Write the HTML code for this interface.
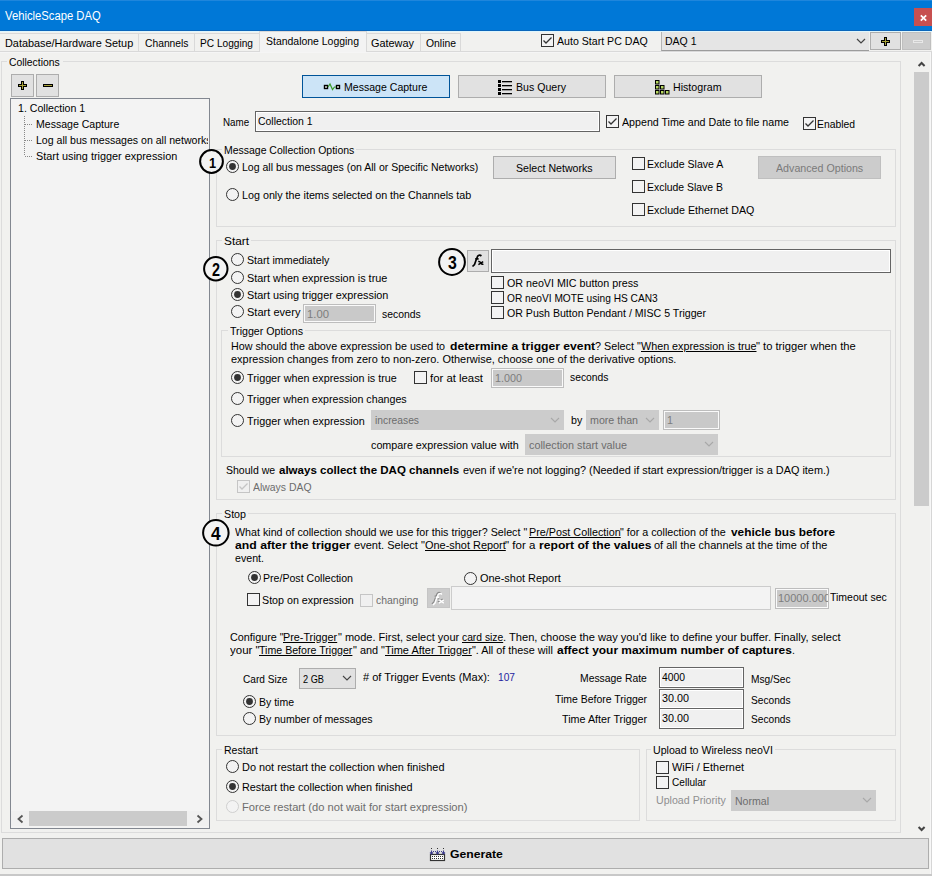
<!DOCTYPE html>
<html><head><meta charset="utf-8"><style>
html,body{margin:0;padding:0}
body{width:932px;height:876px;overflow:hidden;position:relative;background:#f1f1ef;font-family:"Liberation Sans", sans-serif;font-size:11px;color:#000}
b{font-weight:bold}
</style></head><body>
<div style="position:absolute;left:0px;top:0px;width:932px;height:31px;background:#0078d7"></div>
<div style="position:absolute;left:0px;top:0px;width:932px;height:1px;background:#1f86dc"></div>
<div style="position:absolute;left:914px;top:8px;width:18px;height:18px;background:#c75050"></div>
<svg style="position:absolute;left:914px;top:8px" width="18" height="18"><path d="M6.8 7.3 L12.2 12.7 M12.2 7.3 L6.8 12.7" stroke="#fff" stroke-width="1.7"/></svg>
<div style="position:absolute;left:0px;top:30px;width:932px;height:1px;background:#0a66bb"></div>
<div style="position:absolute;left:0px;top:31px;width:932px;height:1px;background:#def6fd"></div>
<div style="position:absolute;left:0px;top:51px;width:932px;height:1px;background:#d9d9d9"></div>
<div style="position:absolute;left:0px;top:33px;width:138px;height:18px;background:#f1f1ef;border-top:1px solid #d9d9d9;box-sizing:border-box"></div>
<div style="position:absolute;left:138px;top:33px;width:56px;height:18px;background:#f1f1ef;border-top:1px solid #d9d9d9;box-sizing:border-box"></div>
<div style="position:absolute;left:194px;top:33px;width:65px;height:18px;background:#f1f1ef;border-top:1px solid #d9d9d9;box-sizing:border-box"></div>
<div style="position:absolute;left:367px;top:33px;width:53px;height:18px;background:#f1f1ef;border-top:1px solid #d9d9d9;box-sizing:border-box"></div>
<div style="position:absolute;left:420px;top:33px;width:41px;height:18px;background:#f1f1ef;border-top:1px solid #d9d9d9;box-sizing:border-box"></div>
<div style="position:absolute;left:138px;top:33px;width:1px;height:18px;background:#d9d9d9"></div>
<div style="position:absolute;left:194px;top:33px;width:1px;height:18px;background:#d9d9d9"></div>
<div style="position:absolute;left:420px;top:33px;width:1px;height:18px;background:#d9d9d9"></div>
<div style="position:absolute;left:460px;top:33px;width:1px;height:18px;background:#d9d9d9"></div>
<div style="position:absolute;left:259px;top:31px;width:108px;height:21px;border:1px solid #d9d9d9;border-bottom:none;box-sizing:border-box;background:#f3f3f3"></div>
<div style="position:absolute;left:541px;top:34px;width:13px;height:13px;box-sizing:border-box;border:1px solid #333;background:#f3f3f3"></div><svg style="position:absolute;left:541px;top:34px" width="13" height="13"><path d="M2.5 6.5 L5 9 L10.5 3.5" fill="none" stroke="#333" stroke-width="1.3"/></svg>
<div style="position:absolute;left:661px;top:32px;width:208px;height:19px;background:#e5e5e5;border-left:1px solid #b4b4b4;border-bottom:1px solid #9c9c9c;box-sizing:border-box"></div>
<svg style="position:absolute;left:856px;top:37.5px" width="10" height="7"><path d="M1 1 L5 5 L9 1" fill="none" stroke="#444" stroke-width="1.2"/></svg>
<div style="position:absolute;left:870px;top:32px;width:31px;height:18px;background:#e1e1e1;border:1px solid #adadad;box-sizing:border-box"></div>
<div style="position:absolute;left:881px;top:40px;width:9px;height:3px;background:#000"></div><div style="position:absolute;left:884px;top:37px;width:3px;height:9px;background:#000"></div><div style="position:absolute;left:882px;top:41px;width:7px;height:1px;background:#a8a23a"></div><div style="position:absolute;left:885px;top:38px;width:1px;height:7px;background:#a8a23a"></div>
<div style="position:absolute;left:902px;top:32px;width:29px;height:18px;background:#cccccc;border:1px solid #bfbfbf;box-sizing:border-box"></div>
<div style="position:absolute;left:913px;top:40px;width:10px;height:3px;border:1px solid #e8e8e8;box-sizing:border-box"></div>
<div style="position:absolute;left:0px;top:52px;width:931px;height:1px;background:#f5f5f5"></div>
<div style="position:absolute;left:930px;top:52px;width:1px;height:822px;background:#f7f7f7"></div>
<div style="position:absolute;left:931px;top:52px;width:1px;height:822px;background:#d6d6d6"></div>
<div style="position:absolute;left:1px;top:61px;width:900px;height:772px;border:1px solid #dcdcdc;box-sizing:border-box"></div>
<div style="position:absolute;left:7px;top:58px;width:56px;height:10px;background:#f1f1ef"></div>
<div style="position:absolute;left:11px;top:74px;width:23px;height:23px;background:#e1e1e1;border:1px solid #adadad;box-sizing:border-box"></div>
<div style="position:absolute;left:18px;top:84px;width:9px;height:3px;background:#000"></div><div style="position:absolute;left:21px;top:81px;width:3px;height:9px;background:#000"></div><div style="position:absolute;left:19px;top:85px;width:7px;height:1px;background:#a8a23a"></div><div style="position:absolute;left:22px;top:82px;width:1px;height:7px;background:#a8a23a"></div>
<div style="position:absolute;left:36px;top:74px;width:23px;height:23px;background:#e1e1e1;border:1px solid #adadad;box-sizing:border-box"></div>
<div style="position:absolute;left:43px;top:84px;width:10px;height:3px;background:#000"></div><div style="position:absolute;left:44px;top:85px;width:8px;height:1px;background:#a8a23a"></div>
<div style="position:absolute;left:10px;top:98px;width:200px;height:731px;background:#f3f3f3;border:1px solid #828790;box-sizing:border-box"></div>
<svg style="position:absolute;left:20px;top:112px" width="20" height="50"><path d="M4.5 4 V44 M5 12.5 H13 M5 28.5 H13 M5 44.5 H13" stroke="#888" stroke-width="1" stroke-dasharray="1 1" fill="none"/></svg>
<div style="position:absolute;left:11px;top:811px;width:198px;height:15px;background:#f0f0f0"></div>
<div style="position:absolute;left:29px;top:811px;width:158px;height:15px;background:#cbcbcb"></div>
<svg style="position:absolute;left:16px;top:814px" width="9" height="10"><path d="M6.5 1.5 L2.5 5 L6.5 8.5" fill="none" stroke="#555" stroke-width="1.8"/></svg>
<svg style="position:absolute;left:195px;top:814px" width="9" height="10"><path d="M2.5 1.5 L6.5 5 L2.5 8.5" fill="none" stroke="#555" stroke-width="1.8"/></svg>
<div style="position:absolute;left:914px;top:72px;width:15px;height:434px;background:#cbcbcb"></div>
<svg style="position:absolute;left:916px;top:59px" width="12" height="10"><path d="M2.6 7 L5.6 4 L8.6 7" fill="none" stroke="#444" stroke-width="2"/></svg>
<svg style="position:absolute;left:916px;top:824px" width="12" height="10"><path d="M2.6 3 L5.6 6 L8.6 3" fill="none" stroke="#444" stroke-width="2"/></svg>
<div style="position:absolute;left:302px;top:75px;width:148px;height:23px;background:#cce4f7;border:1px solid #005499;box-sizing:border-box"></div>
<svg style="position:absolute;left:323px;top:82px" width="18" height="10"><rect x="1.5" y="3.5" width="3" height="3" fill="#fff" stroke="#000" stroke-width="1.4"/><rect x="13.5" y="3.5" width="3" height="3" fill="#fff" stroke="#000" stroke-width="1.4"/><path d="M5 5 L7 2 L9.5 7.5 L11.5 5 H13" fill="none" stroke="#3a9a2a" stroke-width="1.2"/></svg>
<div style="position:absolute;left:458px;top:75px;width:148px;height:23px;background:#e1e1e1;border:1px solid #adadad;box-sizing:border-box"></div>
<svg style="position:absolute;left:497px;top:79px" width="17" height="16"><rect x="1" y="1" width="3" height="3" fill="#000"/><rect x="5" y="2" width="10" height="1.3" fill="#000"/><rect x="1" y="5" width="3" height="3" fill="#000"/><rect x="5" y="6" width="10" height="1.3" fill="#000"/><rect x="1" y="9" width="3" height="3" fill="#000"/><rect x="5" y="10" width="10" height="1.3" fill="#000"/><rect x="1" y="13" width="3" height="3" fill="#000"/><rect x="5" y="14" width="10" height="1.3" fill="#000"/></svg>
<div style="position:absolute;left:614px;top:75px;width:148px;height:23px;background:#e1e1e1;border:1px solid #adadad;box-sizing:border-box"></div>
<svg style="position:absolute;left:655px;top:80px" width="15" height="15"><rect x="0.5" y="0.5" width="3.5" height="3.5" fill="#b8d860" stroke="#000" stroke-width="1"/><rect x="0.5" y="5.5" width="3.5" height="3.5" fill="#b8d860" stroke="#000" stroke-width="1"/><rect x="5.5" y="5.5" width="3.5" height="3.5" fill="#b8d860" stroke="#000" stroke-width="1"/><rect x="0.5" y="10.5" width="3.5" height="3.5" fill="#b8d860" stroke="#000" stroke-width="1"/><rect x="5.5" y="10.5" width="3.5" height="3.5" fill="#b8d860" stroke="#000" stroke-width="1"/><rect x="10.5" y="10.5" width="3.5" height="3.5" fill="#b8d860" stroke="#000" stroke-width="1"/></svg>
<div style="position:absolute;left:255px;top:111px;width:345px;height:21px;background:#f0f0f0;border:1px solid #646464;box-shadow:inset 0 0 0 1px #fff;box-sizing:border-box"></div>
<div style="position:absolute;left:606px;top:115px;width:13px;height:13px;box-sizing:border-box;border:1px solid #333;background:#f3f3f3"></div><svg style="position:absolute;left:606px;top:115px" width="13" height="13"><path d="M2.5 6.5 L5 9 L10.5 3.5" fill="none" stroke="#333" stroke-width="1.3"/></svg>
<div style="position:absolute;left:803px;top:117px;width:13px;height:13px;box-sizing:border-box;border:1px solid #333;background:#f3f3f3"></div><svg style="position:absolute;left:803px;top:117px" width="13" height="13"><path d="M2.5 6.5 L5 9 L10.5 3.5" fill="none" stroke="#333" stroke-width="1.3"/></svg>
<div style="position:absolute;left:216px;top:149px;width:680px;height:78px;border:1px solid #dcdcdc;box-sizing:border-box"></div>
<div style="position:absolute;left:221.7px;top:146px;width:134.3px;height:8px;background:#f1f1ef"></div>
<svg style="position:absolute;left:226px;top:160px" width="13" height="13"><circle cx="6.5" cy="6.5" r="6" fill="#f3f3f3" stroke="#333" stroke-width="1"/><circle cx="6.5" cy="6.5" r="3.4" fill="#333"/></svg>
<svg style="position:absolute;left:226px;top:188px" width="13" height="13"><circle cx="6.5" cy="6.5" r="6" fill="#f3f3f3" stroke="#333" stroke-width="1"/></svg>
<div style="position:absolute;left:493px;top:156px;width:123px;height:23px;background:#e1e1e1;border:1px solid #adadad;box-sizing:border-box"></div>
<div style="position:absolute;left:632px;top:157px;width:13px;height:13px;box-sizing:border-box;border:1px solid #333;background:#f3f3f3"></div>
<div style="position:absolute;left:632px;top:180px;width:13px;height:13px;box-sizing:border-box;border:1px solid #333;background:#f3f3f3"></div>
<div style="position:absolute;left:632px;top:203px;width:13px;height:13px;box-sizing:border-box;border:1px solid #333;background:#f3f3f3"></div>
<div style="position:absolute;left:758px;top:156px;width:123px;height:23px;background:#cccccc;border:1px solid #bfbfbf;box-sizing:border-box"></div>
<div style="position:absolute;left:216px;top:240px;width:680px;height:260px;border:1px solid #dcdcdc;box-sizing:border-box"></div>
<div style="position:absolute;left:221.8px;top:237px;width:29px;height:8px;background:#f1f1ef"></div>
<svg style="position:absolute;left:231px;top:253px" width="13" height="13"><circle cx="6.5" cy="6.5" r="6" fill="#f3f3f3" stroke="#333" stroke-width="1"/></svg>
<svg style="position:absolute;left:231px;top:271px" width="13" height="13"><circle cx="6.5" cy="6.5" r="6" fill="#f3f3f3" stroke="#333" stroke-width="1"/></svg>
<svg style="position:absolute;left:231px;top:288px" width="13" height="13"><circle cx="6.5" cy="6.5" r="6" fill="#f3f3f3" stroke="#333" stroke-width="1"/><circle cx="6.5" cy="6.5" r="3.4" fill="#333"/></svg>
<svg style="position:absolute;left:231px;top:305px" width="13" height="13"><circle cx="6.5" cy="6.5" r="6" fill="#f3f3f3" stroke="#333" stroke-width="1"/></svg>
<div style="position:absolute;left:303px;top:304px;width:73px;height:19px;background:#c9c9c9;border:1px solid #bdbdbd;box-shadow:inset 0 0 0 1px #fafafa;box-sizing:border-box"></div>
<div style="position:absolute;left:467px;top:250px;width:22px;height:22px;background:#e1e1e1;border:1px solid #adadad;box-sizing:border-box"></div>
<svg style="position:absolute;left:467px;top:250px" width="22" height="22"><path d="M5.5 16.5 L7.5 14.5 L9.3 9.5 L10.6 6.3 Q11.6 4.6 13.6 5.2 L14.2 6.2 M8.2 8.8 H11.6" fill="none" stroke="#000" stroke-width="1.7"/><path d="M11.2 11.6 Q12.8 11.2 13.8 12.8 Q14.8 14.6 16.4 14.2 M11.4 14.6 L16.2 11.6" fill="none" stroke="#000" stroke-width="1.5"/></svg>
<div style="position:absolute;left:491px;top:249px;width:400px;height:24px;background:#f0f0f0;border:1px solid #646464;box-shadow:inset 0 0 0 1px #fff;box-sizing:border-box"></div>
<div style="position:absolute;left:491px;top:276px;width:13px;height:13px;box-sizing:border-box;border:1px solid #333;background:#f3f3f3"></div>
<div style="position:absolute;left:491px;top:291px;width:13px;height:13px;box-sizing:border-box;border:1px solid #333;background:#f3f3f3"></div>
<div style="position:absolute;left:491px;top:306px;width:13px;height:13px;box-sizing:border-box;border:1px solid #333;background:#f3f3f3"></div>
<div style="position:absolute;left:221px;top:330px;width:670px;height:127px;border:1px solid #dcdcdc;box-sizing:border-box"></div>
<div style="position:absolute;left:227.5px;top:327px;width:77px;height:8px;background:#f1f1ef"></div>
<svg style="position:absolute;left:231px;top:371px" width="13" height="13"><circle cx="6.5" cy="6.5" r="6" fill="#f3f3f3" stroke="#333" stroke-width="1"/><circle cx="6.5" cy="6.5" r="3.4" fill="#333"/></svg>
<div style="position:absolute;left:414px;top:371px;width:13px;height:13px;box-sizing:border-box;border:1px solid #333;background:#f3f3f3"></div>
<div style="position:absolute;left:491px;top:368px;width:73px;height:20px;background:#c9c9c9;border:1px solid #bdbdbd;box-shadow:inset 0 0 0 1px #fafafa;box-sizing:border-box"></div>
<svg style="position:absolute;left:231px;top:392px" width="13" height="13"><circle cx="6.5" cy="6.5" r="6" fill="#f3f3f3" stroke="#333" stroke-width="1"/></svg>
<svg style="position:absolute;left:231px;top:414px" width="13" height="13"><circle cx="6.5" cy="6.5" r="6" fill="#f3f3f3" stroke="#333" stroke-width="1"/></svg>
<div style="position:absolute;left:371px;top:410px;width:193px;height:20px;background:#cccccc;border:1px solid #cccccc;box-sizing:border-box"></div>
<svg style="position:absolute;left:550px;top:417px" width="10" height="7"><path d="M1 1 L5 5 L9 1" fill="none" stroke="#a8a8a8" stroke-width="1.1"/></svg>
<div style="position:absolute;left:586px;top:410px;width:73px;height:20px;background:#cccccc;border:1px solid #cccccc;box-sizing:border-box"></div>
<svg style="position:absolute;left:645px;top:417px" width="10" height="7"><path d="M1 1 L5 5 L9 1" fill="none" stroke="#a8a8a8" stroke-width="1.1"/></svg>
<div style="position:absolute;left:663px;top:410px;width:57px;height:20px;background:#c9c9c9;border:1px solid #bdbdbd;box-shadow:inset 0 0 0 1px #fafafa;box-sizing:border-box"></div>
<div style="position:absolute;left:525px;top:434px;width:193px;height:21px;background:#cccccc;border:1px solid #cccccc;box-sizing:border-box"></div>
<svg style="position:absolute;left:704px;top:441px" width="10" height="7"><path d="M1 1 L5 5 L9 1" fill="none" stroke="#a8a8a8" stroke-width="1.1"/></svg>
<div style="position:absolute;left:237px;top:480px;width:13px;height:13px;box-sizing:border-box;border:1px solid #c5c5c5;background:#f0f0f0"></div><svg style="position:absolute;left:237px;top:480px" width="13" height="13"><path d="M2.5 6.5 L5 9 L10.5 3.5" fill="none" stroke="#c5c5c5" stroke-width="1.3"/></svg>
<div style="position:absolute;left:216px;top:513px;width:680px;height:223px;border:1px solid #dcdcdc;box-sizing:border-box"></div>
<div style="position:absolute;left:221.7px;top:510px;width:26px;height:8px;background:#f1f1ef"></div>
<svg style="position:absolute;left:248px;top:571px" width="13" height="13"><circle cx="6.5" cy="6.5" r="6" fill="#f3f3f3" stroke="#333" stroke-width="1"/><circle cx="6.5" cy="6.5" r="3.4" fill="#333"/></svg>
<svg style="position:absolute;left:464px;top:572px" width="13" height="13"><circle cx="6.5" cy="6.5" r="6" fill="#f3f3f3" stroke="#333" stroke-width="1"/></svg>
<div style="position:absolute;left:247px;top:593px;width:13px;height:13px;box-sizing:border-box;border:1px solid #333;background:#f3f3f3"></div>
<div style="position:absolute;left:360px;top:594px;width:13px;height:13px;box-sizing:border-box;border:1px solid #c5c5c5;background:#f0f0f0"></div>
<div style="position:absolute;left:427px;top:588px;width:23px;height:20px;background:#cccccc;border:1px solid #c5c5c5;box-sizing:border-box"></div>
<svg style="position:absolute;left:427px;top:588px" width="22" height="22"><g transform="translate(-0.6,-0.6)"><path d="M5.5 16.5 L7.5 14.5 L9.3 9.5 L10.6 6.3 Q11.6 4.6 13.6 5.2 L14.2 6.2 M8.2 8.8 H11.6" fill="none" stroke="#8a8a8a" stroke-width="1.2"/><path d="M11.2 11.6 Q12.8 11.2 13.8 12.8 Q14.8 14.6 16.4 14.2 M11.4 14.6 L16.2 11.6" fill="none" stroke="#8a8a8a" stroke-width="1.1"/></g><g transform="translate(0.5,0.5)"><path d="M5.5 16.5 L7.5 14.5 L9.3 9.5 L10.6 6.3 Q11.6 4.6 13.6 5.2 L14.2 6.2 M8.2 8.8 H11.6" fill="none" stroke="#fff" stroke-width="1.4"/><path d="M11.2 11.6 Q12.8 11.2 13.8 12.8 Q14.8 14.6 16.4 14.2 M11.4 14.6 L16.2 11.6" fill="none" stroke="#fff" stroke-width="1.3"/></g></svg>
<div style="position:absolute;left:451px;top:586px;width:320px;height:24px;background:#f3f3f3;border:1px solid #cccccc;box-sizing:border-box"></div>
<div style="position:absolute;left:775px;top:588px;width:54px;height:21px;background:#c9c9c9;border:1px solid #bdbdbd;box-shadow:inset 0 0 0 1px #fafafa;box-sizing:border-box"></div>
<div style="position:absolute;left:778px;top:590px;width:50px;height:17px;overflow:hidden"><div style="position:absolute;left:0;top:2px;white-space:nowrap;font-size:11px;color:#7d7d7d;line-height:13px">10000.000</div></div>
<div style="position:absolute;left:299px;top:668px;width:57px;height:21px;background:#e1e1e1;border:1px solid #adadad;box-sizing:border-box"></div>
<svg style="position:absolute;left:342px;top:675px" width="10" height="7"><path d="M1 1 L5 5 L9 1" fill="none" stroke="#444" stroke-width="1.1"/></svg>
<svg style="position:absolute;left:243px;top:695px" width="13" height="13"><circle cx="6.5" cy="6.5" r="6" fill="#f3f3f3" stroke="#333" stroke-width="1"/><circle cx="6.5" cy="6.5" r="3.4" fill="#333"/></svg>
<svg style="position:absolute;left:243px;top:712px" width="13" height="13"><circle cx="6.5" cy="6.5" r="6" fill="#f3f3f3" stroke="#333" stroke-width="1"/></svg>
<div style="position:absolute;left:659px;top:667px;width:85px;height:21px;background:#f0f0f0;border:1px solid #646464;box-shadow:inset 0 0 0 1px #fff;box-sizing:border-box"></div>
<div style="position:absolute;left:659px;top:689px;width:85px;height:20px;background:#f0f0f0;border:1px solid #646464;box-shadow:inset 0 0 0 1px #fff;box-sizing:border-box"></div>
<div style="position:absolute;left:659px;top:708px;width:85px;height:21px;background:#f0f0f0;border:1px solid #646464;box-shadow:inset 0 0 0 1px #fff;box-sizing:border-box"></div>
<div style="position:absolute;left:216px;top:749px;width:424px;height:72px;border:1px solid #dcdcdc;box-sizing:border-box"></div>
<div style="position:absolute;left:221.8px;top:746px;width:38px;height:8px;background:#f1f1ef"></div>
<svg style="position:absolute;left:226px;top:760px" width="13" height="13"><circle cx="6.5" cy="6.5" r="6" fill="#f3f3f3" stroke="#333" stroke-width="1"/></svg>
<svg style="position:absolute;left:226px;top:780px" width="13" height="13"><circle cx="6.5" cy="6.5" r="6" fill="#f3f3f3" stroke="#333" stroke-width="1"/><circle cx="6.5" cy="6.5" r="3.4" fill="#333"/></svg>
<svg style="position:absolute;left:226px;top:800px" width="13" height="13"><circle cx="6.5" cy="6.5" r="6" fill="#f3f3f3" stroke="#cfcfcf" stroke-width="1"/></svg>
<div style="position:absolute;left:646px;top:749px;width:250px;height:72px;border:1px solid #dcdcdc;box-sizing:border-box"></div>
<div style="position:absolute;left:651.4px;top:746px;width:123.9px;height:8px;background:#f1f1ef"></div>
<div style="position:absolute;left:656px;top:761px;width:13px;height:13px;box-sizing:border-box;border:1px solid #333;background:#f3f3f3"></div>
<div style="position:absolute;left:656px;top:775.5px;width:13px;height:13px;box-sizing:border-box;border:1px solid #333;background:#f3f3f3"></div>
<div style="position:absolute;left:731px;top:790px;width:145px;height:21px;background:#cccccc;border:1px solid #cccccc;box-sizing:border-box"></div>
<svg style="position:absolute;left:862px;top:797px" width="10" height="7"><path d="M1 1 L5 5 L9 1" fill="none" stroke="#a8a8a8" stroke-width="1.1"/></svg>
<div style="position:absolute;left:2px;top:838px;width:927px;height:31px;background:#e1e1e1;border:1px solid #adadad;box-sizing:border-box"></div>
<svg style="position:absolute;left:429px;top:846px" width="17" height="16"><rect x="1.5" y="8.5" width="14" height="6" fill="#fff" stroke="#333" stroke-width="1.2"/><rect x="3" y="10" width="1" height="1" fill="#333"/><rect x="3" y="12" width="1" height="1" fill="#333"/><rect x="5" y="10" width="1" height="1" fill="#333"/><rect x="5" y="12" width="1" height="1" fill="#333"/><rect x="7" y="10" width="1" height="1" fill="#333"/><rect x="7" y="12" width="1" height="1" fill="#333"/><rect x="9" y="10" width="1" height="1" fill="#333"/><rect x="9" y="12" width="1" height="1" fill="#333"/><rect x="11" y="10" width="1" height="1" fill="#333"/><rect x="11" y="12" width="1" height="1" fill="#333"/><rect x="13" y="10" width="1" height="1" fill="#333"/><rect x="13" y="12" width="1" height="1" fill="#333"/><rect x="2" y="2" width="1" height="1" fill="#333"/><path d="M2.5 4.5 V8.5 M1 6.5 L2.5 8 L4 6.5" stroke="#3c3c8c" stroke-width="1.1" fill="none"/><rect x="8" y="2" width="1" height="1" fill="#333"/><path d="M8.5 4.5 V8.5 M7 6.5 L8.5 8 L10 6.5" stroke="#3c3c8c" stroke-width="1.1" fill="none"/><rect x="14" y="2" width="1" height="1" fill="#333"/><path d="M14.5 4.5 V8.5 M13 6.5 L14.5 8 L16 6.5" stroke="#3c3c8c" stroke-width="1.1" fill="none"/><rect x="4" y="5" width="1" height="1" fill="#3c3c8c"/><rect x="6" y="5" width="1" height="1" fill="#3c3c8c"/><rect x="10" y="5" width="1" height="1" fill="#3c3c8c"/><rect x="12" y="5" width="1" height="1" fill="#3c3c8c"/></svg>
<div style="position:absolute;left:0px;top:874px;width:932px;height:2px;background:#c8c8c8"></div>
<svg style="position:absolute;left:198.1px;top:148.3px" width="27" height="27"><circle cx="13.5" cy="13.5" r="11.4" fill="#f3f3f3" stroke="#000" stroke-width="2"/></svg>
<svg style="position:absolute;left:202.2px;top:255.09999999999997px" width="27.6" height="27.6"><circle cx="13.8" cy="13.8" r="11.700000000000001" fill="#f3f3f3" stroke="#000" stroke-width="2"/></svg>
<svg style="position:absolute;left:436.9px;top:246.8px" width="30" height="30"><circle cx="15.0" cy="15.0" r="12.9" fill="#f3f3f3" stroke="#000" stroke-width="2"/></svg>
<svg style="position:absolute;left:201.15px;top:518.05px" width="29.7" height="29.7"><circle cx="14.85" cy="14.85" r="12.75" fill="#f3f3f3" stroke="#000" stroke-width="2"/></svg>
<svg style="position:absolute;left:206.8px;top:155px;overflow:visible" width="11.099999999999994" height="15"><text x="2" y="13" font-family="Liberation Sans" font-weight="bold" font-size="15.36" textLength="7.10" lengthAdjust="spacingAndGlyphs">1</text></svg>
<svg style="position:absolute;left:210px;top:261.1px;overflow:visible" width="12" height="16.5"><text x="2" y="14.5" font-family="Liberation Sans" font-weight="bold" font-size="17.46" textLength="8.00" lengthAdjust="spacingAndGlyphs">2</text></svg>
<svg style="position:absolute;left:445.8px;top:253.9px;overflow:visible" width="12.800000000000011" height="17.200000000000017"><text x="2" y="15.200000000000017" font-family="Liberation Sans" font-weight="bold" font-size="18.44" textLength="8.80" lengthAdjust="spacingAndGlyphs">3</text></svg>
<svg style="position:absolute;left:209.2px;top:525px;overflow:visible" width="13.600000000000023" height="16.899999999999977"><text x="2" y="14.899999999999977" font-family="Liberation Sans" font-weight="bold" font-size="18.02" textLength="9.60" lengthAdjust="spacingAndGlyphs">4</text></svg>
<div id="t0" style="position:absolute;left:5.30px;top:8.80px;white-space:nowrap;font-size:12.5px;line-height:14.5px;transform:scaleX(0.9002);transform-origin:0 0;color:#fff">VehicleScape DAQ</div>
<div id="t1" style="position:absolute;left:4.80px;top:36.50px;white-space:nowrap;font-size:11px;line-height:13px;transform:scaleX(0.9889);transform-origin:0 0;">Database/Hardware Setup</div>
<div id="t2" style="position:absolute;left:144.50px;top:36.50px;white-space:nowrap;font-size:11px;line-height:13px;transform:scaleX(0.9358);transform-origin:0 0;">Channels</div>
<div id="t3" style="position:absolute;left:200.00px;top:36.50px;white-space:nowrap;font-size:11px;line-height:13px;transform:scaleX(0.9217);transform-origin:0 0;">PC Logging</div>
<div id="t4" style="position:absolute;left:371.00px;top:36.50px;white-space:nowrap;font-size:11px;line-height:13px;transform:scaleX(0.9903);transform-origin:0 0;">Gateway</div>
<div id="t5" style="position:absolute;left:426.00px;top:36.50px;white-space:nowrap;font-size:11px;line-height:13px;transform:scaleX(0.9435);transform-origin:0 0;">Online</div>
<div id="t6" style="position:absolute;left:266.00px;top:34.80px;white-space:nowrap;font-size:11px;line-height:13px;transform:scaleX(0.9502);transform-origin:0 0;">Standalone Logging</div>
<div id="t7" style="position:absolute;left:557.00px;top:34.80px;white-space:nowrap;font-size:11px;line-height:13px;transform:scaleX(0.9633);transform-origin:0 0;">Auto Start PC DAQ</div>
<div id="t8" style="position:absolute;left:664.50px;top:35.00px;white-space:nowrap;font-size:11px;line-height:13px;transform:scaleX(0.9541);transform-origin:0 0;">DAQ 1</div>
<div id="t9" style="position:absolute;left:8.70px;top:56.00px;white-space:nowrap;font-size:11px;line-height:13px;transform:scaleX(0.9422);transform-origin:0 0;">Collections</div>
<div id="t10" style="position:absolute;left:17.50px;top:102.00px;white-space:nowrap;font-size:11px;line-height:13px;transform:scaleX(0.9639);transform-origin:0 0;">1. Collection 1</div>
<div id="t11" style="position:absolute;left:35.75px;top:118.00px;white-space:nowrap;font-size:11px;line-height:13px;transform:scaleX(0.9588);transform-origin:0 0;">Message Capture</div>
<div style="position:absolute;left:0;top:0;width:208px;height:876px;overflow:hidden"><div id="t12" style="position:absolute;left:35.75px;top:134.10px;white-space:nowrap;font-size:11px;line-height:13px;transform:scaleX(0.9599);transform-origin:0 0;">Log all bus messages on all networks</div></div>
<div id="t13" style="position:absolute;left:35.75px;top:149.80px;white-space:nowrap;font-size:11px;line-height:13px;transform:scaleX(0.9872);transform-origin:0 0;">Start using trigger expression</div>
<div id="t14" style="position:absolute;left:343.70px;top:81.00px;white-space:nowrap;font-size:11px;line-height:13px;transform:scaleX(0.9594);transform-origin:0 0;">Message Capture</div>
<div id="t15" style="position:absolute;left:516.00px;top:81.00px;white-space:nowrap;font-size:11px;line-height:13px;transform:scaleX(0.9621);transform-origin:0 0;">Bus Query</div>
<div id="t16" style="position:absolute;left:673.00px;top:81.00px;white-space:nowrap;font-size:11px;line-height:13px;transform:scaleX(0.9676);transform-origin:0 0;">Histogram</div>
<div id="t17" style="position:absolute;left:222.70px;top:116.00px;white-space:nowrap;font-size:11px;line-height:13px;transform:scaleX(0.8895);transform-origin:0 0;">Name</div>
<div id="t18" style="position:absolute;left:257.80px;top:114.70px;white-space:nowrap;font-size:11px;line-height:13px;transform:scaleX(0.9481);transform-origin:0 0;">Collection 1</div>
<div id="t19" style="position:absolute;left:622.30px;top:115.50px;white-space:nowrap;font-size:11px;line-height:13px;transform:scaleX(0.9684);transform-origin:0 0;">Append Time and Date to file name</div>
<div id="t20" style="position:absolute;left:817.00px;top:118.00px;white-space:nowrap;font-size:11px;line-height:13px;transform:scaleX(0.9412);transform-origin:0 0;">Enabled</div>
<div id="t21" style="position:absolute;left:223.70px;top:143.70px;white-space:nowrap;font-size:11px;line-height:13px;transform:scaleX(0.9513);transform-origin:0 0;">Message Collection Options</div>
<div id="t22" style="position:absolute;left:241.70px;top:161.00px;white-space:nowrap;font-size:11px;line-height:13px;transform:scaleX(0.9567);transform-origin:0 0;">Log all bus messages (on All or Specific Networks)</div>
<div id="t23" style="position:absolute;left:241.70px;top:188.60px;white-space:nowrap;font-size:11px;line-height:13px;transform:scaleX(0.9765);transform-origin:0 0;">Log only the items selected on the Channels tab</div>
<div id="t24" style="position:absolute;left:515.70px;top:161.50px;white-space:nowrap;font-size:11px;line-height:13px;transform:scaleX(0.9637);transform-origin:0 0;">Select Networks</div>
<div id="t25" style="position:absolute;left:647.30px;top:158.10px;white-space:nowrap;font-size:11px;line-height:13px;transform:scaleX(0.9597);transform-origin:0 0;">Exclude Slave A</div>
<div id="t26" style="position:absolute;left:647.30px;top:180.80px;white-space:nowrap;font-size:11px;line-height:13px;transform:scaleX(0.9487);transform-origin:0 0;">Exclude Slave B</div>
<div id="t27" style="position:absolute;left:647.30px;top:204.00px;white-space:nowrap;font-size:11px;line-height:13px;transform:scaleX(0.9704);transform-origin:0 0;">Exclude Ethernet DAQ</div>
<div id="t28" style="position:absolute;left:776.00px;top:161.50px;white-space:nowrap;font-size:11px;line-height:13px;transform:scaleX(0.9701);transform-origin:0 0;color:#7a7a7a">Advanced Options</div>
<div id="t29" style="position:absolute;left:223.80px;top:234.80px;white-space:nowrap;font-size:11px;line-height:13px;transform:scaleX(1.0760);transform-origin:0 0;">Start</div>
<div id="t30" style="position:absolute;left:246.60px;top:253.90px;white-space:nowrap;font-size:11px;line-height:13px;transform:scaleX(0.9696);transform-origin:0 0;">Start immediately</div>
<div id="t31" style="position:absolute;left:246.60px;top:271.50px;white-space:nowrap;font-size:11px;line-height:13px;transform:scaleX(0.9897);transform-origin:0 0;">Start when expression is true</div>
<div id="t32" style="position:absolute;left:246.60px;top:288.70px;white-space:nowrap;font-size:11px;line-height:13px;transform:scaleX(0.9883);transform-origin:0 0;">Start using trigger expression</div>
<div id="t33" style="position:absolute;left:246.60px;top:306.00px;white-space:nowrap;font-size:11px;line-height:13px;transform:scaleX(1.0040);transform-origin:0 0;">Start every</div>
<div id="t34" style="position:absolute;left:307.00px;top:308.00px;white-space:nowrap;font-size:11px;line-height:13px;transform:scaleX(1.0270);transform-origin:0 0;color:#7d7d7d">1.00</div>
<div id="t35" style="position:absolute;left:381.60px;top:308.00px;white-space:nowrap;font-size:11px;line-height:13px;transform:scaleX(0.9443);transform-origin:0 0;">seconds</div>
<div id="t36" style="position:absolute;left:507.00px;top:277.00px;white-space:nowrap;font-size:11px;line-height:13px;transform:scaleX(0.9724);transform-origin:0 0;">OR neoVI MIC button press</div>
<div id="t37" style="position:absolute;left:507.00px;top:292.00px;white-space:nowrap;font-size:11px;line-height:13px;transform:scaleX(0.9232);transform-origin:0 0;">OR neoVI MOTE using HS CAN3</div>
<div id="t38" style="position:absolute;left:507.00px;top:307.00px;white-space:nowrap;font-size:11px;line-height:13px;transform:scaleX(0.9629);transform-origin:0 0;">OR Push Button Pendant / MISC 5 Trigger</div>
<div id="t39" style="position:absolute;left:229.50px;top:325.00px;white-space:nowrap;font-size:11px;line-height:13px;transform:scaleX(0.9681);transform-origin:0 0;">Trigger Options</div>
<div id="t40" style="position:absolute;left:230.60px;top:339.70px;white-space:nowrap;font-size:11px;line-height:13px;transform:scaleX(0.9752);transform-origin:0 0;">How should the above expression be used to</div>
<div id="t41" style="position:absolute;left:449.90px;top:339.70px;white-space:nowrap;font-size:11px;line-height:13px;transform:scaleX(1.1039);transform-origin:0 0;"><b>determine a trigger event</b></div>
<div id="t42" style="position:absolute;left:595.00px;top:339.70px;white-space:nowrap;font-size:11px;line-height:13px;transform:scaleX(0.9803);transform-origin:0 0;">? Select "</div>
<div id="t43" style="position:absolute;left:640.80px;top:339.70px;white-space:nowrap;font-size:11px;line-height:13px;transform:scaleX(0.9788);transform-origin:0 0;"><u>When expression is true</u></div>
<div id="t44" style="position:absolute;left:756.30px;top:339.70px;white-space:nowrap;font-size:11px;line-height:13px;transform:scaleX(1.0165);transform-origin:0 0;">" to trigger when the</div>
<div id="t45" style="position:absolute;left:230.60px;top:352.80px;white-space:nowrap;font-size:11px;line-height:13px;transform:scaleX(0.9965);transform-origin:0 0;">expression changes from zero to non-zero. Otherwise, choose one of the derivative options.</div>
<div id="t46" style="position:absolute;left:247.30px;top:372.00px;white-space:nowrap;font-size:11px;line-height:13px;transform:scaleX(0.9780);transform-origin:0 0;">Trigger when expression is true</div>
<div id="t47" style="position:absolute;left:429.70px;top:372.00px;white-space:nowrap;font-size:11px;line-height:13px;transform:scaleX(1.0319);transform-origin:0 0;">for at least</div>
<div id="t48" style="position:absolute;left:495.00px;top:372.00px;white-space:nowrap;font-size:11px;line-height:13px;transform:scaleX(0.9807);transform-origin:0 0;color:#7d7d7d">1.000</div>
<div id="t49" style="position:absolute;left:569.80px;top:371.00px;white-space:nowrap;font-size:11px;line-height:13px;transform:scaleX(0.9394);transform-origin:0 0;">seconds</div>
<div id="t50" style="position:absolute;left:247.30px;top:393.00px;white-space:nowrap;font-size:11px;line-height:13px;transform:scaleX(0.9697);transform-origin:0 0;">Trigger when expression changes</div>
<div id="t51" style="position:absolute;left:247.30px;top:414.50px;white-space:nowrap;font-size:11px;line-height:13px;transform:scaleX(0.9805);transform-origin:0 0;">Trigger when expression</div>
<div id="t52" style="position:absolute;left:375.00px;top:414.00px;white-space:nowrap;font-size:11px;line-height:13px;transform:scaleX(0.9346);transform-origin:0 0;color:#6d6d6d">increases</div>
<div id="t53" style="position:absolute;left:570.70px;top:414.00px;white-space:nowrap;font-size:11px;line-height:13px;transform:scaleX(0.9720);transform-origin:0 0;">by</div>
<div id="t54" style="position:absolute;left:590.00px;top:414.00px;white-space:nowrap;font-size:11px;line-height:13px;transform:scaleX(0.9691);transform-origin:0 0;color:#6d6d6d">more than</div>
<div id="t55" style="position:absolute;left:667.00px;top:414.00px;white-space:nowrap;font-size:11px;line-height:13px;transform:scaleX(0.9796);transform-origin:0 0;color:#7d7d7d">1</div>
<div id="t56" style="position:absolute;left:370.60px;top:438.70px;white-space:nowrap;font-size:11px;line-height:13px;transform:scaleX(0.9786);transform-origin:0 0;">compare expression value with</div>
<div id="t57" style="position:absolute;left:529.00px;top:439.00px;white-space:nowrap;font-size:11px;line-height:13px;transform:scaleX(0.9832);transform-origin:0 0;color:#6d6d6d">collection start value</div>
<div id="t58" style="position:absolute;left:226.40px;top:463.70px;white-space:nowrap;font-size:11px;line-height:13px;transform:scaleX(0.9557);transform-origin:0 0;">Should we</div>
<div id="t59" style="position:absolute;left:279.20px;top:463.70px;white-space:nowrap;font-size:11px;line-height:13px;transform:scaleX(1.0483);transform-origin:0 0;"><b>always collect the DAQ channels</b></div>
<div id="t60" style="position:absolute;left:462.90px;top:463.70px;white-space:nowrap;font-size:11px;line-height:13px;transform:scaleX(0.9887);transform-origin:0 0;">even if we're not logging? (Needed if start expression/trigger is a DAQ item.)</div>
<div id="t61" style="position:absolute;left:252.80px;top:480.60px;white-space:nowrap;font-size:11px;line-height:13px;transform:scaleX(0.9474);transform-origin:0 0;color:#6d6d6d">Always DAQ</div>
<div id="t62" style="position:absolute;left:223.70px;top:508.00px;white-space:nowrap;font-size:11px;line-height:13px;transform:scaleX(0.9717);transform-origin:0 0;">Stop</div>
<div id="t63" style="position:absolute;left:234.80px;top:525.90px;white-space:nowrap;font-size:11px;line-height:13px;transform:scaleX(0.9725);transform-origin:0 0;">What kind of collection should we use for this trigger? Select "</div>
<div id="t64" style="position:absolute;left:528.60px;top:525.90px;white-space:nowrap;font-size:11px;line-height:13px;transform:scaleX(0.9803);transform-origin:0 0;"><u>Pre/Post Collection</u></div>
<div id="t65" style="position:absolute;left:620.30px;top:525.90px;white-space:nowrap;font-size:11px;line-height:13px;transform:scaleX(0.9745);transform-origin:0 0;">" for a collection of the</div>
<div id="t66" style="position:absolute;left:731.20px;top:525.90px;white-space:nowrap;font-size:11px;line-height:13px;transform:scaleX(1.0767);transform-origin:0 0;"><b>vehicle bus before</b></div>
<div id="t67" style="position:absolute;left:234.80px;top:538.50px;white-space:nowrap;font-size:11px;line-height:13px;transform:scaleX(1.1125);transform-origin:0 0;"><b>and after the trigger</b></div>
<div id="t68" style="position:absolute;left:353.70px;top:538.50px;white-space:nowrap;font-size:11px;line-height:13px;transform:scaleX(1.0048);transform-origin:0 0;">event. Select "</div>
<div id="t69" style="position:absolute;left:424.60px;top:538.50px;white-space:nowrap;font-size:11px;line-height:13px;transform:scaleX(0.9935);transform-origin:0 0;"><u>One-shot Report</u></div>
<div id="t70" style="position:absolute;left:505.40px;top:538.50px;white-space:nowrap;font-size:11px;line-height:13px;transform:scaleX(1.0459);transform-origin:0 0;">" for a&nbsp;</div>
<div id="t71" style="position:absolute;left:538.90px;top:538.50px;white-space:nowrap;font-size:11px;line-height:13px;transform:scaleX(1.1031);transform-origin:0 0;"><b>report of the values</b></div>
<div id="t72" style="position:absolute;left:653.90px;top:538.50px;white-space:nowrap;font-size:11px;line-height:13px;transform:scaleX(0.9984);transform-origin:0 0;">of all the channels at the time of the</div>
<div id="t73" style="position:absolute;left:234.80px;top:551.50px;white-space:nowrap;font-size:11px;line-height:13px;transform:scaleX(0.9677);transform-origin:0 0;">event.</div>
<div id="t74" style="position:absolute;left:263.00px;top:571.80px;white-space:nowrap;font-size:11px;line-height:13px;transform:scaleX(0.9621);transform-origin:0 0;">Pre/Post Collection</div>
<div id="t75" style="position:absolute;left:479.50px;top:572.00px;white-space:nowrap;font-size:11px;line-height:13px;transform:scaleX(0.9947);transform-origin:0 0;">One-shot Report</div>
<div id="t76" style="position:absolute;left:262.40px;top:594.20px;white-space:nowrap;font-size:11px;line-height:13px;transform:scaleX(0.9727);transform-origin:0 0;">Stop on expression</div>
<div id="t77" style="position:absolute;left:375.70px;top:594.20px;white-space:nowrap;font-size:11px;line-height:13px;transform:scaleX(0.9495);transform-origin:0 0;color:#6d6d6d">changing</div>
<div id="t78" style="position:absolute;left:829.70px;top:591.40px;white-space:nowrap;font-size:11px;line-height:13px;transform:scaleX(0.9544);transform-origin:0 0;">Timeout sec</div>
<div id="t79" style="position:absolute;left:229.70px;top:630.90px;white-space:nowrap;font-size:11px;line-height:13px;transform:scaleX(0.9825);transform-origin:0 0;">Configure "</div>
<div id="t80" style="position:absolute;left:283.40px;top:630.90px;white-space:nowrap;font-size:11px;line-height:13px;transform:scaleX(0.9816);transform-origin:0 0;"><u>Pre-Trigger</u></div>
<div id="t81" style="position:absolute;left:337.60px;top:630.90px;white-space:nowrap;font-size:11px;line-height:13px;transform:scaleX(0.9996);transform-origin:0 0;">" mode. First, select your&nbsp;</div>
<div id="t82" style="position:absolute;left:461.90px;top:630.90px;white-space:nowrap;font-size:11px;line-height:13px;transform:scaleX(0.9357);transform-origin:0 0;"><u>card size</u></div>
<div id="t83" style="position:absolute;left:503.10px;top:630.90px;white-space:nowrap;font-size:11px;line-height:13px;transform:scaleX(1.0104);transform-origin:0 0;">. Then, choose the way you'd like to define your buffer. Finally, select</div>
<div id="t84" style="position:absolute;left:229.70px;top:643.80px;white-space:nowrap;font-size:11px;line-height:13px;transform:scaleX(1.0437);transform-origin:0 0;">your "</div>
<div id="t85" style="position:absolute;left:259.30px;top:643.80px;white-space:nowrap;font-size:11px;line-height:13px;transform:scaleX(0.9649);transform-origin:0 0;"><u>Time Before Trigger</u></div>
<div id="t86" style="position:absolute;left:352.70px;top:643.80px;white-space:nowrap;font-size:11px;line-height:13px;transform:scaleX(0.9913);transform-origin:0 0;">" and "</div>
<div id="t87" style="position:absolute;left:384.70px;top:643.80px;white-space:nowrap;font-size:11px;line-height:13px;transform:scaleX(0.9975);transform-origin:0 0;"><u>Time After Trigger</u></div>
<div id="t88" style="position:absolute;left:471.50px;top:643.80px;white-space:nowrap;font-size:11px;line-height:13px;transform:scaleX(0.9833);transform-origin:0 0;">". All of these will</div>
<div id="t89" style="position:absolute;left:556.80px;top:643.80px;white-space:nowrap;font-size:11px;line-height:13px;transform:scaleX(1.0851);transform-origin:0 0;"><b>affect your maximum number of captures</b></div>
<div id="t90" style="position:absolute;left:791.60px;top:643.80px;white-space:nowrap;font-size:11px;line-height:13px;transform:scaleX(0.955);transform-origin:0 0;">.</div>
<div id="t91" style="position:absolute;left:242.80px;top:672.80px;white-space:nowrap;font-size:11px;line-height:13px;transform:scaleX(0.9193);transform-origin:0 0;">Card Size</div>
<div id="t92" style="position:absolute;left:303.00px;top:672.80px;white-space:nowrap;font-size:11px;line-height:13px;transform:scaleX(0.8374);transform-origin:0 0;">2 GB</div>
<div id="t93" style="position:absolute;left:362.70px;top:670.90px;white-space:nowrap;font-size:11px;line-height:13px;transform:scaleX(1.0028);transform-origin:0 0;"># of Trigger Events (Max):</div>
<div id="t94" style="position:absolute;left:498.00px;top:671.30px;white-space:nowrap;font-size:11px;line-height:13px;transform:scaleX(0.9260);transform-origin:0 0;color:#1f1fa0">107</div>
<div id="t95" style="position:absolute;left:258.60px;top:696.20px;white-space:nowrap;font-size:11px;line-height:13px;transform:scaleX(0.9540);transform-origin:0 0;">By time</div>
<div id="t96" style="position:absolute;left:258.60px;top:713.30px;white-space:nowrap;font-size:11px;line-height:13px;transform:scaleX(0.9576);transform-origin:0 0;">By number of messages</div>
<div id="t97" style="position:absolute;left:579.90px;top:672.00px;white-space:nowrap;font-size:11px;line-height:13px;transform:scaleX(0.9431);transform-origin:0 0;">Message Rate</div>
<div id="t98" style="position:absolute;left:555.30px;top:693.00px;white-space:nowrap;font-size:11px;line-height:13px;transform:scaleX(0.9515);transform-origin:0 0;">Time Before Trigger</div>
<div id="t99" style="position:absolute;left:562.30px;top:712.80px;white-space:nowrap;font-size:11px;line-height:13px;transform:scaleX(0.9780);transform-origin:0 0;">Time After Trigger</div>
<div id="t100" style="position:absolute;left:662.20px;top:670.70px;white-space:nowrap;font-size:11px;line-height:13px;transform:scaleX(0.9394);transform-origin:0 0;">4000</div>
<div id="t101" style="position:absolute;left:662.20px;top:691.50px;white-space:nowrap;font-size:11px;line-height:13px;transform:scaleX(0.9807);transform-origin:0 0;">30.00</div>
<div id="t102" style="position:absolute;left:662.20px;top:711.50px;white-space:nowrap;font-size:11px;line-height:13px;transform:scaleX(0.9807);transform-origin:0 0;">30.00</div>
<div id="t103" style="position:absolute;left:750.60px;top:672.90px;white-space:nowrap;font-size:11px;line-height:13px;transform:scaleX(0.9253);transform-origin:0 0;">Msg/Sec</div>
<div id="t104" style="position:absolute;left:750.60px;top:693.80px;white-space:nowrap;font-size:11px;line-height:13px;transform:scaleX(0.9250);transform-origin:0 0;">Seconds</div>
<div id="t105" style="position:absolute;left:750.60px;top:713.00px;white-space:nowrap;font-size:11px;line-height:13px;transform:scaleX(0.9250);transform-origin:0 0;">Seconds</div>
<div id="t106" style="position:absolute;left:223.80px;top:743.80px;white-space:nowrap;font-size:11px;line-height:13px;transform:scaleX(0.9586);transform-origin:0 0;">Restart</div>
<div id="t107" style="position:absolute;left:241.50px;top:760.60px;white-space:nowrap;font-size:11px;line-height:13px;transform:scaleX(0.9915);transform-origin:0 0;">Do not restart the collection when finished</div>
<div id="t108" style="position:absolute;left:241.50px;top:780.70px;white-space:nowrap;font-size:11px;line-height:13px;transform:scaleX(0.9853);transform-origin:0 0;">Restart the collection when finished</div>
<div id="t109" style="position:absolute;left:241.50px;top:800.80px;white-space:nowrap;font-size:11px;line-height:13px;transform:scaleX(1.0133);transform-origin:0 0;color:#6d6d6d">Force restart (do not wait for start expression)</div>
<div id="t110" style="position:absolute;left:653.40px;top:744.00px;white-space:nowrap;font-size:11px;line-height:13px;transform:scaleX(0.9660);transform-origin:0 0;">Upload to Wireless neoVI</div>
<div id="t111" style="position:absolute;left:671.80px;top:760.70px;white-space:nowrap;font-size:11px;line-height:13px;transform:scaleX(0.9897);transform-origin:0 0;">WiFi / Ethernet</div>
<div id="t112" style="position:absolute;left:671.80px;top:776.00px;white-space:nowrap;font-size:11px;line-height:13px;transform:scaleX(0.9170);transform-origin:0 0;">Cellular</div>
<div id="t113" style="position:absolute;left:656.30px;top:793.60px;white-space:nowrap;font-size:11px;line-height:13px;transform:scaleX(0.9662);transform-origin:0 0;color:#8f8f8f">Upload Priority</div>
<div id="t114" style="position:absolute;left:734.80px;top:795.00px;white-space:nowrap;font-size:11px;line-height:13px;transform:scaleX(0.9590);transform-origin:0 0;color:#6d6d6d">Normal</div>
<div id="t115" style="position:absolute;left:450.00px;top:847.80px;white-space:nowrap;font-size:11px;line-height:13px;transform:scaleX(1.1089);transform-origin:0 0;font-weight:bold">Generate</div>
</body></html>
